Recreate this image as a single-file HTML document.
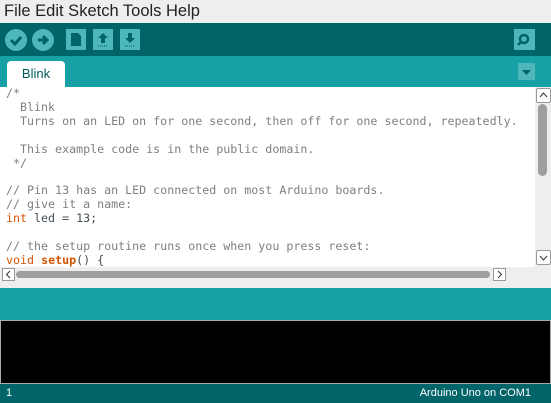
<html><head><style>
body{margin:0;width:551px;height:403px;position:relative;overflow:hidden;font-family:"Liberation Sans",sans-serif;background:#eee}
.a{position:absolute}
.code{font-family:"DejaVu Sans Mono","Liberation Mono",monospace;font-size:11.65px;line-height:13.9px;white-space:pre;color:#434f54}
.c{color:#7f7f7f}.k{color:#d35400}.f{color:#d35400;font-weight:bold}
.btn{position:absolute;top:29px;width:22px;height:22px;border-radius:50%;background:#4db7bb}
.sq{position:absolute;top:29px;width:20px;height:21px;background:#4db7bb}
</style></head><body>
<div class="a" style="left:0;top:0;width:551px;height:23px;background:#eeeeee;font-size:16.5px;color:#222;line-height:23px;padding-left:4px">File Edit Sketch Tools Help</div>
<div class="a" style="left:0;top:23px;width:551px;height:33px;background:#006468"></div>
<div class="btn" style="left:5px"><svg width="22" height="22"><path d="M6 11l4 4 6-7" stroke="#006468" stroke-width="3" fill="none"/></svg></div>
<div class="btn" style="left:32px"><svg width="22" height="22"><path d="M6 11h8M11 7l4 4-4 4" stroke="#006468" stroke-width="3" fill="none"/></svg></div>
<div class="sq" style="left:66px"><svg width="20" height="21"><path d="M5 4h7l3 3v10H5z" fill="#006468"/></svg></div>
<div class="sq" style="left:93px"><svg width="20" height="21"><path d="M10 4l5 5h-3v5H8V9H5z" fill="#006468"/><path d="M5 17h10" stroke="#006468" stroke-dasharray="1 1"/></svg></div>
<div class="sq" style="left:120px"><svg width="20" height="21"><path d="M10 14l5-5h-3V4H8v5H5z" fill="#006468"/><path d="M5 17h10" stroke="#006468" stroke-dasharray="1 1"/></svg></div>
<div class="sq" style="left:514px;width:21px"><svg width="21" height="21"><circle cx="10" cy="10" r="4" stroke="#006468" stroke-width="2.5" fill="none"/><path d="M7 13l-3 3" stroke="#006468" stroke-width="2.5"/></svg></div>
<div class="a" style="left:0;top:56px;width:551px;height:31px;background:#17a1a5"></div>
<div class="a" style="left:7px;top:61px;width:58px;height:26px;background:#fff;border-radius:4px 4px 0 0;color:#005c5f;font-size:13px;text-align:center;line-height:26px">Blink</div>
<div class="a" style="left:518px;top:63px;width:17px;height:17px;background:#4db7bb"><svg width="17" height="17"><path d="M4 7h9l-4.5 5z" fill="#006468"/></svg></div>
<div class="a" style="left:0;top:87px;width:535px;height:180px;background:#fff;overflow:hidden">
<div class="a code" style="left:6px;top:0px"><span class="c">/*
  Blink
  Turns on an LED on for one second, then off for one second, repeatedly.

  This example code is in the public domain.
 */</span>

<span class="c">// Pin 13 has an LED connected on most Arduino boards.
// give it a name:</span>
<span class="k">int</span> led = 13;

<span class="c">// the setup routine runs once when you press reset:</span>
<span class="k">void</span> <span class="f">setup</span>() {</div></div>
<div class="a" style="left:535px;top:87px;width:16px;height:180px;background:#eee"></div>
<div class="a" style="left:536px;top:88px;width:13px;height:13px;border:1px solid #999;background:#fff;border-radius:2px"><svg width="13" height="13"><path d="M3 8l3.5-4 3.5 4" stroke="#333" fill="none"/></svg></div>
<div class="a" style="left:538px;top:104px;width:9px;height:72px;background:#9e9e9e;border-radius:5px"></div>
<div class="a" style="left:536px;top:250px;width:13px;height:13px;border:1px solid #999;background:#fff;border-radius:2px"><svg width="13" height="13"><path d="M3 5l3.5 4 3.5-4" stroke="#333" fill="none"/></svg></div>
<div class="a" style="left:0;top:267px;width:535px;height:14px;background:#eee"></div>
<div class="a" style="left:2px;top:268px;width:11px;height:11px;border:1px solid #999;background:#fff"><svg width="11" height="11"><path d="M7 2l-3.5 3.5 3.5 3.5" stroke="#333" fill="none"/></svg></div>
<div class="a" style="left:16px;top:271px;width:474px;height:7px;background:#9e9e9e;border-radius:4px"></div>
<div class="a" style="left:493px;top:268px;width:11px;height:11px;border:1px solid #999;background:#fff"><svg width="11" height="11"><path d="M4 2l3.5 3.5-3.5 3.5" stroke="#333" fill="none"/></svg></div>
<div class="a" style="left:0;top:288px;width:551px;height:32px;background:#17a1a5"></div>
<div class="a" style="left:0;top:320px;width:549px;height:62px;background:#000;border:1px solid #aaa"></div>
<div class="a" style="left:0;top:384px;width:551px;height:19px;background:#006468;color:#fff;font-size:11px;line-height:19px"><span style="position:absolute;left:6px">1</span><span style="position:absolute;right:20px">Arduino Uno on COM1</span></div>
</body></html>
